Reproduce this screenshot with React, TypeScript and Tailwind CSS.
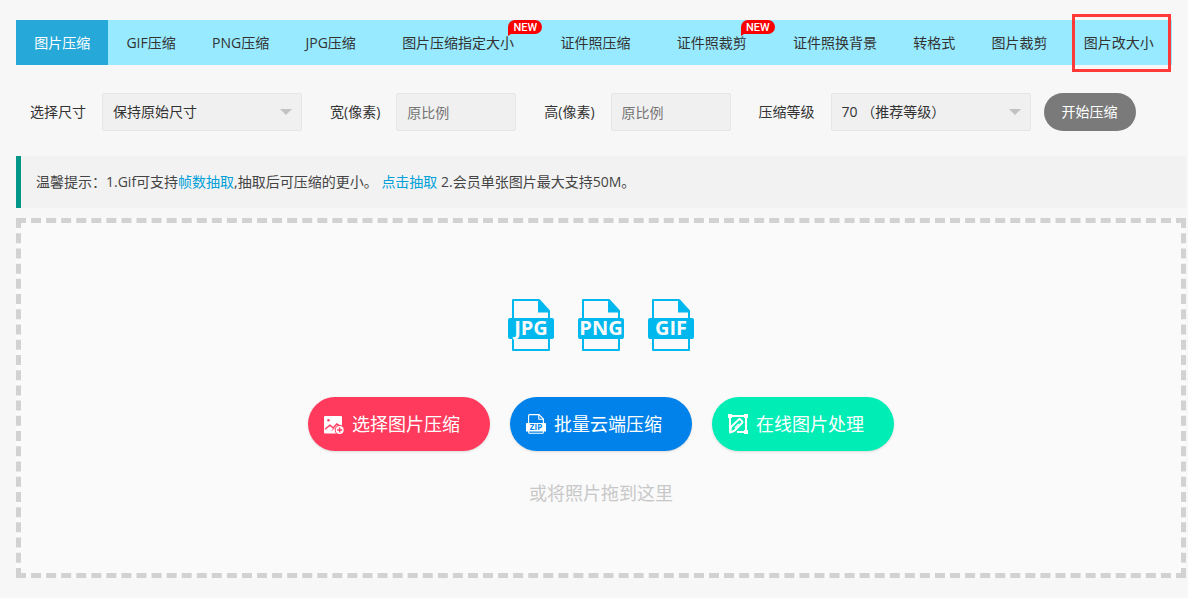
import { ReactNode } from "react";

const tabs = [
  { label: "图片压缩", active: true },
  { label: "GIF压缩" },
  { label: "PNG压缩" },
  { label: "JPG压缩" },
  { label: "图片压缩指定大小", isNew: true },
  { label: "证件照压缩" },
  { label: "证件照裁剪", isNew: true },
  { label: "证件照换背景" },
  { label: "转格式" },
  { label: "图片裁剪" },
  { label: "图片改大小", marked: true },
];

function NewBadge() {
  return (
    <span className="absolute right-0 top-0 h-[14px] w-[34px] rounded-r-full rounded-tl-full bg-[#fa0000] text-center font-[Roboto] text-[11px] font-medium leading-[15px] text-white">
      NEW
      <svg className="absolute left-0 top-2 h-2 w-2" viewBox="0 0 8 8" aria-hidden="true">
        <path d="M0 0H4V6H3L0 8Z" fill="#fa0000" />
      </svg>
    </span>
  );
}

function Tab({ label, active, isNew, marked }: { label: string; active?: boolean; isNew?: boolean; marked?: boolean }) {
  return (
    <a
      href="#"
      className={`relative block h-full flex-auto whitespace-nowrap text-center leading-[45px] ${
        isNew ? "px-7" : "px-[18px]"
      } ${active ? "bg-[#26a9d8] text-white" : "text-[#333]"}`}
    >
      {label}
      {isNew && <NewBadge />}
      {marked && <span className="absolute -bottom-[7px] -top-[6px] left-[6px] right-px border-3 border-[#ff3838]" />}
    </a>
  );
}

function Field({ id, label, children }: { id: string; label: string; children: ReactNode }) {
  return (
    <div className="flex items-center gap-4">
      <label htmlFor={id} className="whitespace-nowrap">
        {label}
      </label>
      {children}
    </div>
  );
}

function Select({ id, value }: { id: string; value: string }) {
  return (
    <div className="relative">
      <select
        id={id}
        className="h-[38px] w-[200px] appearance-none rounded-xs border border-[#e6e6e6] bg-[#f0f0f0] pl-[10px] pr-8"
      >
        <option>{value}</option>
      </select>
      <svg className="pointer-events-none absolute right-[10px] top-4 h-[6px] w-3" viewBox="0 0 12 6" aria-hidden="true">
        <path d="M0 0H12L6 6Z" fill="#c2c2c2" />
      </svg>
    </div>
  );
}

function SizeInput({ id }: { id: string }) {
  return (
    <input
      id={id}
      type="text"
      placeholder="原比例"
      className="h-[38px] w-[120px] rounded-xs border border-[#e6e6e6] bg-[#f0f0f0] px-[10px] placeholder:text-[#757575]"
    />
  );
}

function FileIcon({ type }: { type: string }) {
  return (
    <svg className="h-[52px] w-[46px]" viewBox="0 0 46 52" role="img" aria-label={type}>
      <path d="M5 1H31L41 12V51H5Z" fill="none" stroke="#00b7ee" strokeWidth="2" strokeLinejoin="round" />
      <path d="M30 1L42 13.5H30Z" fill="#00b7ee" />
      <rect x="0" y="19" width="46" height="21" rx="2" fill="#00b7ee" />
      <text x="23" y="36" textAnchor="middle" fill="#fafafa" fontSize="20" fontWeight="700" fontFamily="Open Sans, sans-serif">
        {type}
      </text>
    </svg>
  );
}

function PictureIcon() {
  return (
    <svg className="h-5 w-5" viewBox="0 0 20 20" aria-hidden="true">
      <rect x="0" y="2" width="18" height="17.5" rx="1" fill="#fff" />
      <circle cx="4.5" cy="6.3" r="1.2" fill="#ff3a5c" />
      <path d="M1 15.2L6 11.2L9.2 14L12.8 10L17.5 13.2" fill="none" stroke="#ff3a5c" strokeWidth="1.4" />
      <path d="M8 16.5L10 14.4" fill="none" stroke="#ff3a5c" strokeWidth="1" />
      <circle cx="15.7" cy="16" r="5" fill="#ff3a5c" />
      <circle cx="15.7" cy="16" r="4" fill="#fff" />
      <path d="M15.7 13.5V18.5M13.2 16H18.2" stroke="#ff3a5c" strokeWidth="1.3" />
    </svg>
  );
}

function ZipIcon() {
  return (
    <svg className="h-5 w-5" viewBox="0 0 20 20" aria-hidden="true">
      <path d="M2.6 9V1.6Q2.6 0.6 3.6 0.6H13L17.4 5V18.2Q17.4 19.3 16.4 19.3H3.6Q2.6 19.3 2.6 18.2V16" fill="none" stroke="#fff" strokeWidth="1.1" />
      <path d="M12.8 0.6V5.2H17.4" fill="none" stroke="#fff" strokeWidth="1.1" />
      <rect x="0" y="9" width="20" height="8.6" rx="0.6" fill="#fff" />
      <text x="10" y="16.2" textAnchor="middle" fill="#0082ea" fontSize="8" fontWeight="700" fontFamily="Open Sans, sans-serif">
        ZIP
      </text>
    </svg>
  );
}

function EditIcon() {
  return (
    <svg className="h-5 w-5" viewBox="0 0 20 20" aria-hidden="true">
      <path d="M2 2H18V18H9M2 2V18" fill="none" stroke="#fff" strokeWidth="2" />
      <path d="M0 0H4V4H0ZM16 0H20V4H16ZM16 16H20V20H16Z" fill="#fff" />
      <path d="M2 18.5L3 13L10.8 5.4Q11.6 4.8 12.4 5.6L14.2 7.4Q14.8 8.2 14 9L6.4 16.8Z" fill="#00edb6" stroke="#fff" strokeWidth="2" strokeLinejoin="round" />
      <path d="M6.8 13.8L10.8 9.8" stroke="#fff" strokeWidth="1.2" />
    </svg>
  );
}

function ActionButton({ color, icon, children }: { color: string; icon: ReactNode; children: ReactNode }) {
  return (
    <button
      type="button"
      className={`flex h-[54px] w-[182px] items-center gap-2 rounded-full pl-4 text-lg text-white shadow-sm ${color}`}
    >
      {icon}
      {children}
    </button>
  );
}

export default function App() {
  return (
    <div className="min-h-screen bg-[#f7f7f7] pb-5 pl-4 pr-[2px] pt-5 font-['Open_Sans','Noto_Sans_CJK_SC',sans-serif] text-sm text-[#333]">
      <nav className="mr-[14px] flex h-[45px] bg-[#97eaff]">
        {tabs.map((tab) => (
          <Tab key={tab.label} {...tab} />
        ))}
      </nav>

      <form className="mt-7 flex items-center gap-7 pl-[14px]">
        <Field id="size" label="选择尺寸">
          <Select id="size" value="保持原始尺寸" />
        </Field>
        <Field id="width" label="宽(像素)">
          <SizeInput id="width" />
        </Field>
        <Field id="height" label="高(像素)">
          <SizeInput id="height" />
        </Field>
        <div className="flex items-center gap-[13px]">
          <Field id="level" label="压缩等级">
            <Select id="level" value="70 （推荐等级）" />
          </Field>
          <button type="button" className="h-[38px] w-[92px] rounded-full bg-[#7a7a7a] text-white">
            开始压缩
          </button>
        </div>
      </form>

      <p className="mt-[25px] rounded-r-xs border-l-5 border-[#009688] bg-[#f2f2f2] px-[15px] py-[15px] leading-[22px] text-[#444]">
        温馨提示：1.Gif可支持
        <a href="#" className="text-[#01a0d8]">
          帧数抽取
        </a>
        ,抽取后可压缩的更小。{" "}
        <a href="#" className="text-[#01a0d8]">
          点击抽取
        </a>{" "}
        2.会员单张图片最大支持50M。
      </p>

      <main className="mt-[10px] flex flex-col items-center border-5 border-dashed border-[#d2d2d2] bg-[#fafafa] pb-[68px] pt-[76px]">
        <div className="flex gap-6">
          <FileIcon type="JPG" />
          <FileIcon type="PNG" />
          <FileIcon type="GIF" />
        </div>
        <div className="mt-[46px] flex gap-5">
          <ActionButton color="bg-[#ff3a5c]" icon={<PictureIcon />}>
            选择图片压缩
          </ActionButton>
          <ActionButton color="bg-[#0082ea]" icon={<ZipIcon />}>
            批量云端压缩
          </ActionButton>
          <ActionButton color="bg-[#00edb6]" icon={<EditIcon />}>
            在线图片处理
          </ActionButton>
        </div>
        <p className="mt-[30px] text-lg leading-6 text-[#c8c8c8]">或将照片拖到这里</p>
      </main>
    </div>
  );
}
